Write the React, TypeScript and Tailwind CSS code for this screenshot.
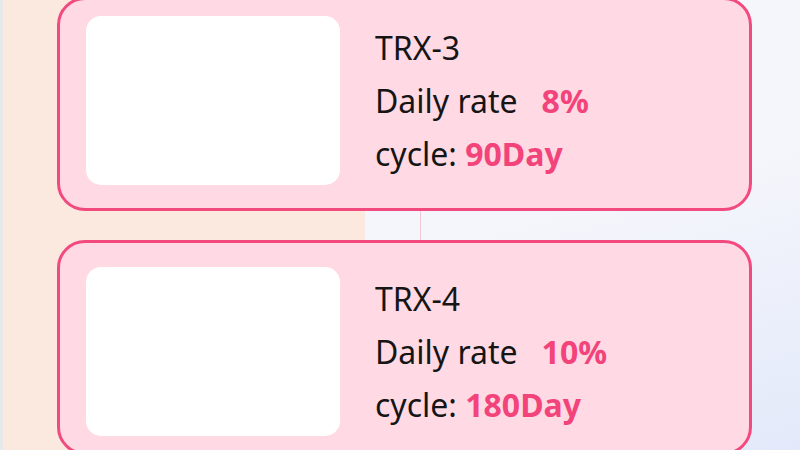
import React from "react";

type Plan = {
  name: string;
  rate: string;
  days: string;
  pad: string;
  height: string;
};

const plans: Plan[] = [
  { name: "TRX-3", rate: "8%", days: "90Day", pad: "pt-[16px]", height: "h-[214px]" },
  { name: "TRX-4", rate: "10%", days: "180Day", pad: "pt-[24px]", height: "h-[215px]" },
];

function PlanCard({ plan }: { plan: Plan }) {
  return (
    <div
      className={`${plan.height} ${plan.pad} w-[695px] shrink-0 rounded-[28px] border-[3px] border-[#f24a7e] bg-[#ffd9e3] pl-[26px] flex items-start`}
    >
      <div className="h-[169px] w-[254px] shrink-0 rounded-[15px] bg-white" />
      <div className="ml-[35px] mt-[5px] flex flex-col text-[32px] leading-[53px] text-[#151515]">
        <span>{plan.name}</span>
        <span>
          Daily rate
          <span className="ml-[24px] font-bold text-[#f2437a]">{plan.rate}</span>
        </span>
        <span>
          cycle: <span className="font-bold text-[#f2437a]">{plan.days}</span>
        </span>
      </div>
    </div>
  );
}

export default function App() {
  return (
    <div
      className="relative h-[450px] w-[800px] overflow-hidden"
      style={{ fontFamily: '"Noto Sans", "Open Sans", sans-serif' }}
    >
      {/* page backdrop: side rail, warm column, cool panel */}
      <div className="absolute inset-0 flex">
        <div className="w-[3px] bg-[#e5e9e9]" />
        <div className="w-[362px] bg-[#fbe9df]" />
        <div className="flex-1 bg-[linear-gradient(165deg,#f5f6fb_45%,#e3e9fa_100%)]" />
      </div>

      <div className="relative -mt-[3px] ml-[57px] flex flex-col">
        <PlanCard plan={plans[0]} />
        <div className="h-[29px] pl-[363px]">
          <div className="h-full w-px bg-[#f1c9d5]" />
        </div>
        <PlanCard plan={plans[1]} />
      </div>
    </div>
  );
}
